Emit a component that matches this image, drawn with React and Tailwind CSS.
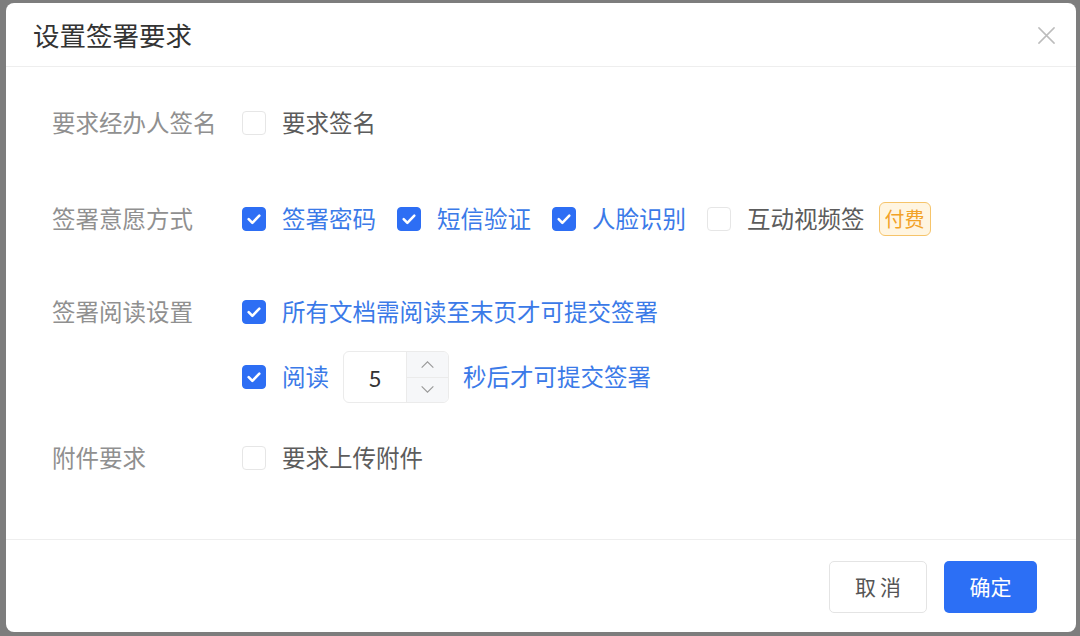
import { useState } from 'react'

const font = { fontFamily: '"Noto Sans CJK SC", "Noto Sans", sans-serif' }

const CheckBox = ({ checked, onChange }) => (
  <button
    type="button"
    onClick={onChange}
    className={`w-6 h-6 shrink-0 rounded-[4px] flex items-center justify-center border ${
      checked ? 'bg-[#2d6ef4] border-[#2d6ef4]' : 'bg-white border-[#e6e6e6]'
    }`}
  >
    {checked && (
      <svg viewBox="0 0 24 24" className="w-6 h-6" fill="none">
        <path d="M6.2 12.2 10.2 16.2 17.8 8.4" stroke="#fff" strokeWidth="2.8" strokeLinecap="round" strokeLinejoin="round" />
      </svg>
    )}
  </button>
)

const Option = ({ label, checked, onToggle, className = '' }) => (
  <label className={`flex items-center h-10 cursor-pointer ${className}`} onClick={onToggle}>
    <CheckBox checked={checked} />
    <span className={`ml-4 text-[23.5px] ${checked ? 'text-[#3b7ae8]' : 'text-[#5c5c5c]'}`}>{label}</span>
  </label>
)

const FormRow = ({ label, children, className = '' }) => (
  <div className={`flex ${className}`}>
    <div className="w-[190px] shrink-0 h-10 flex items-center text-[23.5px] text-[#909090]">{label}</div>
    <div className="flex flex-col">{children}</div>
  </div>
)

export default function App() {
  const [opts, setOpts] = useState({
    sign: false,
    password: true,
    sms: true,
    face: true,
    video: false,
    readAll: true,
    readSeconds: true,
    attach: false,
  })
  const [seconds, setSeconds] = useState(5)
  const toggle = (key) => setOpts((o) => ({ ...o, [key]: !o[key] }))

  return (
    <div className="w-[1080px] h-[636px] bg-[#7d7d7d] pt-[3px] pl-[6px] overflow-hidden" style={font}>
      <div className="w-[1070px] h-[629px] bg-white rounded-[8px] flex flex-col">
        {/* Header */}
        <div className="h-[64px] shrink-0 flex items-center justify-between pl-[27px] pr-[18px] border-b border-[#eeeeee]">
          <h2 className="text-[26.5px] text-[#333333]">设置签署要求</h2>
          <button type="button" className="w-6 h-6 flex items-center justify-center mt-[2px]">
            <svg viewBox="0 0 20 20" className="w-[19px] h-[19px]" fill="none">
              <path d="M2 2 18 18M18 2 2 18" stroke="#bcbcbc" strokeWidth="1.6" strokeLinecap="round" />
            </svg>
          </button>
        </div>

        {/* Body */}
        <div className="flex-1 pl-[46px] pt-[36px]">
          <FormRow label="要求经办人签名">
            <Option label="要求签名" checked={opts.sign} onToggle={() => toggle('sign')} />
          </FormRow>

          <FormRow label="签署意愿方式" className="mt-[56px]">
            <div className="flex items-center">
              <Option label="签署密码" checked={opts.password} onToggle={() => toggle('password')} />
              <Option label="短信验证" checked={opts.sms} onToggle={() => toggle('sms')} className="ml-[21px]" />
              <Option label="人脸识别" checked={opts.face} onToggle={() => toggle('face')} className="ml-[21px]" />
              <Option label="互动视频签" checked={opts.video} onToggle={() => toggle('video')} className="ml-[21px]" />
              <span className="ml-[14px] h-[34px] px-[5px] flex items-center rounded-[6px] border border-[#f6c46a] bg-[#fff5e1] text-[20px] text-[#f2a227]">
                付费
              </span>
            </div>
          </FormRow>

          <FormRow label="签署阅读设置" className="mt-[53px]">
            <Option label="所有文档需阅读至末页才可提交签署" checked={opts.readAll} onToggle={() => toggle('readAll')} />
            <div className="flex items-center mt-[19px] h-[52px]">
              <CheckBox checked={opts.readSeconds} onChange={() => toggle('readSeconds')} />
              <span className="ml-4 text-[23.5px] text-[#3b7ae8]">阅读</span>
              <div className="ml-[14px] w-[106px] h-[52px] flex rounded-[6px] border border-[#ebebeb] overflow-hidden">
                <div className="flex-1 flex items-center pl-[25px] text-[22px] text-[#333333]">{seconds}</div>
                <div className="w-[42px] flex flex-col border-l border-[#ebebeb] bg-[#f6f7f9]">
                  <button type="button" onClick={() => setSeconds((s) => s + 1)} className="flex-1 flex items-center justify-center border-b border-[#ebebeb]">
                    <svg viewBox="0 0 16 10" className="w-[15px] h-[9px]" fill="none">
                      <path d="M1.5 8.5 8 2l6.5 6.5" stroke="#9a9a9a" strokeWidth="1.3" />
                    </svg>
                  </button>
                  <button type="button" onClick={() => setSeconds((s) => Math.max(1, s - 1))} className="flex-1 flex items-center justify-center">
                    <svg viewBox="0 0 16 10" className="w-[15px] h-[9px]" fill="none">
                      <path d="M1.5 1.5 8 8l6.5-6.5" stroke="#9a9a9a" strokeWidth="1.3" />
                    </svg>
                  </button>
                </div>
              </div>
              <span className="ml-[14px] text-[23.5px] text-[#3b7ae8]">秒后才可提交签署</span>
            </div>
          </FormRow>

          <FormRow label="附件要求" className="mt-[35px]">
            <Option label="要求上传附件" checked={opts.attach} onToggle={() => toggle('attach')} />
          </FormRow>
        </div>

        {/* Footer */}
        <div className="h-[93px] shrink-0 border-t border-[#eeeeee] flex items-start justify-end pt-[21px] pr-[39px] gap-[17px]">
          <button type="button" className="w-[98px] h-[52px] rounded-[5px] border border-[#e4e4e4] bg-white text-[21px] text-[#555555] tracking-[4px] pl-[4px]">
            取消
          </button>
          <button type="button" className="w-[93px] h-[52px] rounded-[5px] bg-[#2c6ff5] text-[21px] text-white">
            确定
          </button>
        </div>
      </div>
    </div>
  )
}
